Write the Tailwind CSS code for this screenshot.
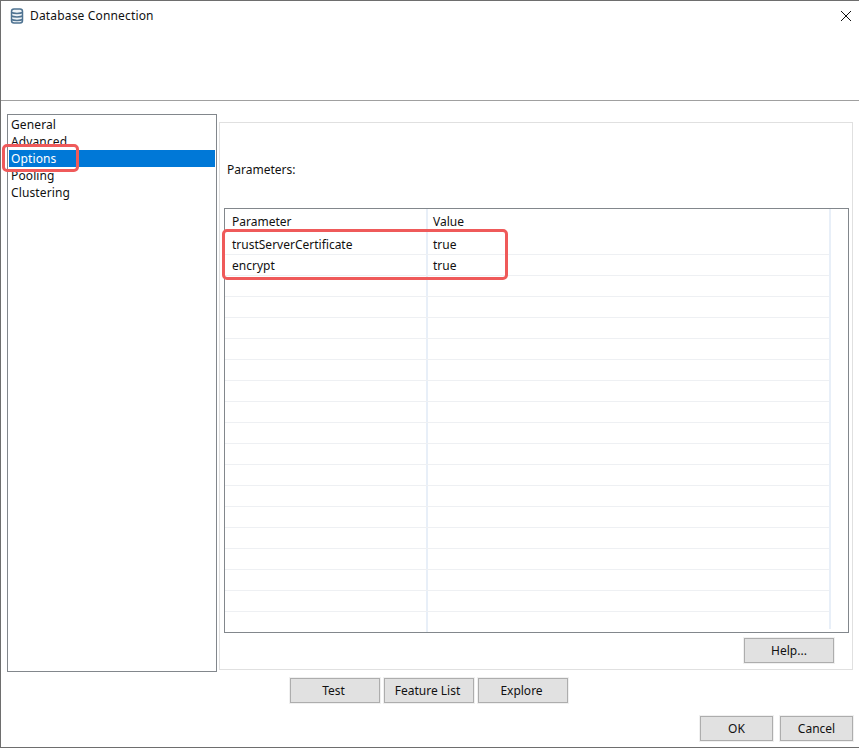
<!DOCTYPE html>
<html lang="en">
<head>
    <meta charset="UTF-8">
    <title>Database Connection</title>
    <script src="https://cdn.jsdelivr.net/npm/@tailwindcss/browser@4"></script>
</head>
<body class="bg-white">
    <div class="relative w-[859px] h-[748px] flex flex-col bg-white border-l border-t border-b border-[#6e6e6e] font-['Noto_Sans','Open_Sans',sans-serif] text-[12px] text-[#111] overflow-hidden">
        <!-- Title area -->
        <header class="h-[100px] shrink-0 border-b border-[#a0a0a0] flex items-start justify-between pl-[9px] pr-[8px] pt-[6px]">
            <div class="flex items-center gap-[6px] h-[18px]">
                <svg class="w-[14px] h-[16px]" viewBox="0 0 14 16" fill="none" stroke="#4f7391" stroke-width="1.5">
                    <rect x="1.5" y="1" width="11" height="14" rx="2.5" fill="#eef3f7"/>
                    <path d="M1.5 4.5c2 1.2 9 1.2 11 0M1.5 8c2 1.2 9 1.2 11 0M1.5 11.5c2 1.2 9 1.2 11 0"/>
                </svg>
                <span class="tracking-[0.16px]">Database Connection</span>
            </div>
            <svg class="w-[10px] h-[10px] mt-[4px]" viewBox="0 0 10 10" stroke="#111" stroke-width="1" fill="none">
                <path d="M0 0l10 10M10 0L0 10"/>
            </svg>
        </header>

        <!-- List + options panel -->
        <div class="flex items-start pl-[6px] pt-[13px]">
            <ul class="w-[210px] h-[558px] shrink-0 border border-[#82878c] p-px tracking-[0.12px]">
                <li class="h-[17px] leading-[17px] pl-[2px]">General</li>
                <li class="h-[17px] leading-[17px] pl-[2px]">Advanced</li>
                <li class="h-[17px] leading-[17px] pl-[2px] bg-[#0078d7] text-white">Options</li>
                <li class="h-[17px] leading-[17px] pl-[2px]">Pooling</li>
                <li class="h-[17px] leading-[17px] pl-[2px]">Clustering</li>
            </ul>
            <section class="w-[634px] h-[548px] ml-[2px] mt-[8px] border border-[#e0e0e0] pl-[4px] flex flex-col">
                <div class="h-[85px] shrink-0 pt-[38px] pl-[3px] leading-[18px]">Parameters:</div>
                <div class="relative w-[625px] h-[425px] shrink-0 border border-[#82878c] flex flex-col">
                    <div class="flex h-[25px] shrink-0 pr-[18px]">
                        <div class="w-[203px] pl-[7px] leading-[25px] border-r-2 border-[#e8eff8]">Parameter</div>
                        <div class="pl-[5px] leading-[25px]">Value</div>
                    </div>
                    <div id="rows" class="flex-1 flex flex-col pr-[18px] overflow-hidden">
                        <div class="flex h-[21px] shrink-0 border-b border-[#eef0f3]">
                            <div class="w-[203px] pl-[7px] leading-[21px] border-r-2 border-[#e8eff8]">trustServerCertificate</div>
                            <div class="pl-[5px] leading-[21px]">true</div>
                        </div>
                        <div class="flex h-[21px] shrink-0 border-b border-[#eef0f3]">
                            <div class="w-[203px] pl-[7px] leading-[21px] border-r-2 border-[#e8eff8]">encrypt</div>
                            <div class="pl-[5px] leading-[21px]">true</div>
                        </div>
                    </div>
                    <div class="absolute top-0 bottom-[3px] right-[17px] w-[2px] bg-[#e8eff8]"></div>
                </div>
                <div class="flex justify-end pr-[18px] pt-[5px]">
                    <button class="w-[90px] h-[25px] bg-[#e1e1e1] border border-[#adadad] shadow-[0_0_0_1px_#f0f0f0]">Help...</button>
                </div>
            </section>
        </div>

        <!-- Test buttons -->
        <div class="flex gap-[4px] pl-[289px] mt-[6px]">
            <button class="w-[90px] h-[25px] pr-[3px] bg-[#e1e1e1] border border-[#adadad] shadow-[0_0_0_1px_#f0f0f0]">Test</button>
            <button class="w-[90px] h-[25px] pr-[3px] bg-[#e1e1e1] border border-[#adadad] shadow-[0_0_0_1px_#f0f0f0]">Feature List</button>
            <button class="w-[90px] h-[25px] pr-[3px] bg-[#e1e1e1] border border-[#adadad] shadow-[0_0_0_1px_#f0f0f0]">Explore</button>
        </div>

        <!-- OK / Cancel -->
        <div class="flex justify-end gap-[7px] pr-[6px] mt-[13px]">
            <button class="w-[73px] h-[25px] bg-[#e1e1e1] border border-[#adadad] shadow-[0_0_0_1px_#f0f0f0]">OK</button>
            <button class="w-[73px] h-[25px] bg-[#e1e1e1] border border-[#adadad] shadow-[0_0_0_1px_#f0f0f0]">Cancel</button>
        </div>

        <!-- Red annotation boxes -->
        <div class="absolute left-[1px] top-[143px] w-[77px] h-[28px] border-[3px] border-[#ef5a5a] rounded-[5px]"></div>
        <div class="absolute left-[221px] top-[228px] w-[286px] h-[51px] border-[3px] border-[#ef5a5a] rounded-[5px]"></div>
    </div>
    <script>
        // fill the empty grid rows
        const rows = document.getElementById('rows');
        for (let i = 0; i < 17; i++) {
            rows.insertAdjacentHTML('beforeend', '<div class="flex h-[21px] shrink-0 border-b border-[#eef0f3]"><div class="w-[203px] border-r-2 border-[#e8eff8]"></div></div>');
        }
    </script>
</body>
</html>
